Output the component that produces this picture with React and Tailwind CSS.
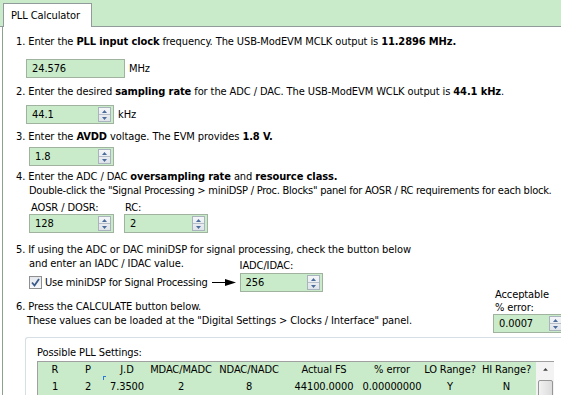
import React from "react";

const font = { fontFamily: '"DejaVu Sans Condensed", "DejaVu Sans", sans-serif' };

function Spinner() {
  return (
    <div className="ml-auto mr-[2px] flex h-[15px] w-[13px] flex-col border border-[#a9b3bd] bg-gradient-to-b from-[#f4f6f8] to-[#dfe4ea]">
      <div className="flex flex-1 items-center justify-center border-b border-[#b5bec8]">
        <svg width="5" height="3" viewBox="0 0 5 3">
          <path d="M0 3 L2.5 0 L5 3 Z" fill="#4a6c9b" />
        </svg>
      </div>
      <div className="flex flex-1 items-center justify-center">
        <svg width="5" height="3" viewBox="0 0 5 3">
          <path d="M0 0 L2.5 3 L5 0 Z" fill="#4a6c9b" />
        </svg>
      </div>
    </div>
  );
}

function NumberBox({ value, width, spin = true, className = "" }) {
  return (
    <div
      className={`flex h-[19px] items-center border border-[#9fb39f] bg-[#c9ebc9] pl-[5px] ${width} ${className}`}
    >
      <span>{value}</span>
      {spin && <Spinner />}
    </div>
  );
}

const columns = [
  ["R", "1", "w-[34px]"],
  ["P", "2", "w-[32px]"],
  ["J.D", "7.3500", "w-[46px]"],
  ["MDAC/MADC", "2", "w-[62px]"],
  ["NDAC/NADC", "8", "w-[74px]"],
  ["Actual FS", "44100.0000", "w-[76px]"],
  ["% error", "0.00000000", "w-[60px]"],
  ["LO Range?", "Y", "w-[56px]"],
  ["HI Range?", "N", "w-[57px]"],
];

export default function App() {
  return (
    <div
      className="h-[395px] w-[561px] overflow-hidden bg-white text-[11px] leading-[14px] tracking-[-0.1px] text-black"
      style={font}
    >
      <div className="h-[27px] border-b border-[#919b9c] bg-[#c9ebc9] pl-[3px] pt-[3px]">
        <div className="-mb-px flex h-[24px] w-[89px] items-center border border-b-0 border-[#919b9c] bg-white pl-[7px]">
          PLL Calculator
        </div>
      </div>

      <div className="ml-[2px] h-[368px] border-l border-[#8ea08e] pl-[13px] pt-[8px]">
        <p>
          1. Enter the <b>PLL input clock</b> frequency. The USB-ModEVM MCLK output is <b>11.2896 MHz.</b>
        </p>
        <div className="mt-[10px] flex items-center">
          <NumberBox value="24.576" width="w-[99px]" spin={false} className="ml-[10px]" />
          <span className="ml-[4px]">MHz</span>
        </div>

        <p className="mt-[7px]">
          2. Enter the desired <b>sampling rate</b> for the ADC / DAC. The USB-ModEVM WCLK output is <b>44.1 kHz</b>.
        </p>
        <div className="mt-[6px] flex items-center">
          <NumberBox value="44.1" width="w-[88px]" className="ml-[10px]" />
          <span className="ml-[4px]">kHz</span>
        </div>

        <p className="mt-[6px]">
          3. Enter the <b>AVDD</b> voltage. The EVM provides <b>1.8 V.</b>
        </p>
        <NumberBox value="1.8" width="w-[85px]" className="ml-[13px] mt-[3px]" />

        <p className="mt-[4px]">
          4. Enter the ADC / DAC <b>oversampling rate</b> and <b>resource class.</b>
        </p>
        <p className="whitespace-nowrap pl-[13px] tracking-[-0.25px]">
          Double-click the "Signal Processing &gt; miniDSP / Proc. Blocks" panel for AOSR / RC requirements for each block.
        </p>
        <div className="mt-[3px] flex gap-[10px] pl-[13px]">
          <div>
            <p className="pl-[2px] leading-[13px]">AOSR / DOSR:</p>
            <NumberBox value="128" width="w-[85px]" />
          </div>
          <div>
            <p className="pl-[1px] leading-[13px]">RC:</p>
            <NumberBox value="2" width="w-[84px]" />
          </div>
        </div>

        <p className="mt-[10px]">
          5. If using the ADC or DAC miniDSP for signal processing, check the button below
        </p>
        <div className="flex items-end pl-[13px]">
          <div>
            <p>and enter an IADC / IDAC value.</p>
            <div className="mt-[2px] flex h-[19px] items-center">
              <span className="flex h-[13px] w-[13px] items-center justify-center border border-[#8f8f8f] bg-gradient-to-b from-[#e4e8ee] to-[#f6f8fa]">
                <svg width="9" height="9" viewBox="0 0 9 9">
                  <path d="M1 4.5 L3.5 7.5 L8 1" fill="none" stroke="#3b5a8a" strokeWidth="1.8" />
                </svg>
              </span>
              <span className="ml-[3px] tracking-[-0.2px]">Use miniDSP for Signal Processing</span>
            </div>
          </div>
          <svg className="mb-[5px] ml-[4px]" width="24" height="9" viewBox="0 0 24 9">
            <path d="M0 4.5 H15" stroke="#000" strokeWidth="1" />
            <path d="M13 1 L24 4.5 L13 8 Z" fill="#000" />
          </svg>
          <div className="ml-[4px]">
            <p className="pb-[1px] leading-[13px]">IADC/IDAC:</p>
            <NumberBox value="256" width="w-[83px]" />
          </div>
        </div>

        <div className="mt-[8px] flex">
          <div>
            <p>6. Press the CALCULATE button below.</p>
            <p className="pl-[11px]">These values can be loaded at the "Digital Settings &gt; Clocks / Interface" panel.</p>
          </div>
          <div className="-mr-[4px] -mt-[12px] ml-auto">
            <p className="pl-[2px] leading-[13px]">Acceptable</p>
            <p className="pl-[2px] leading-[13px]">% error:</p>
            <NumberBox value="0.0007" width="w-[72px]" />
          </div>
        </div>

        <div className="ml-[9px] mt-[4px] h-[80px] rounded-tl-[3px] border-l border-t border-[#d5dfe5] pl-[11px] pt-[8px]">
          <p>Possible PLL Settings:</p>
          <div className="mt-[1px] flex h-[40px] w-[517px] border-l border-t border-[#a0a0a0] bg-[#c9ebc9]">
            <div>
              <div className="flex h-[16px] items-center">
                {columns.map(([head, , w]) => (
                  <span key={head} className={`${w} text-center`}>
                    {head}
                  </span>
                ))}
              </div>
              <div className="flex h-[17px] items-center">
                {columns.map(([head, cell, w]) => (
                  <span key={head} className={`${w} relative text-center`}>
                    {head === "J.D" && (
                      <span className="absolute left-[-1px] top-[-4px] h-[4px] w-[3px] border-l border-t border-[#2a7ad6]" />
                    )}
                    {cell}
                  </span>
                ))}
              </div>
            </div>
            <div className="ml-auto flex w-[18px] flex-col items-center bg-[#f3f3f3]">
              <svg className="mt-[6px]" width="7" height="4" viewBox="0 0 7 4">
                <path d="M0 4 L3.5 0 L7 4 Z" fill="#404040" />
              </svg>
              <div className="mt-[9px] h-[30px] w-[15px] rounded-[2px] border border-[#969696] bg-gradient-to-r from-[#f2f2f2] to-[#dcdcdc]" />
            </div>
          </div>
        </div>
      </div>
    </div>
  );
}
